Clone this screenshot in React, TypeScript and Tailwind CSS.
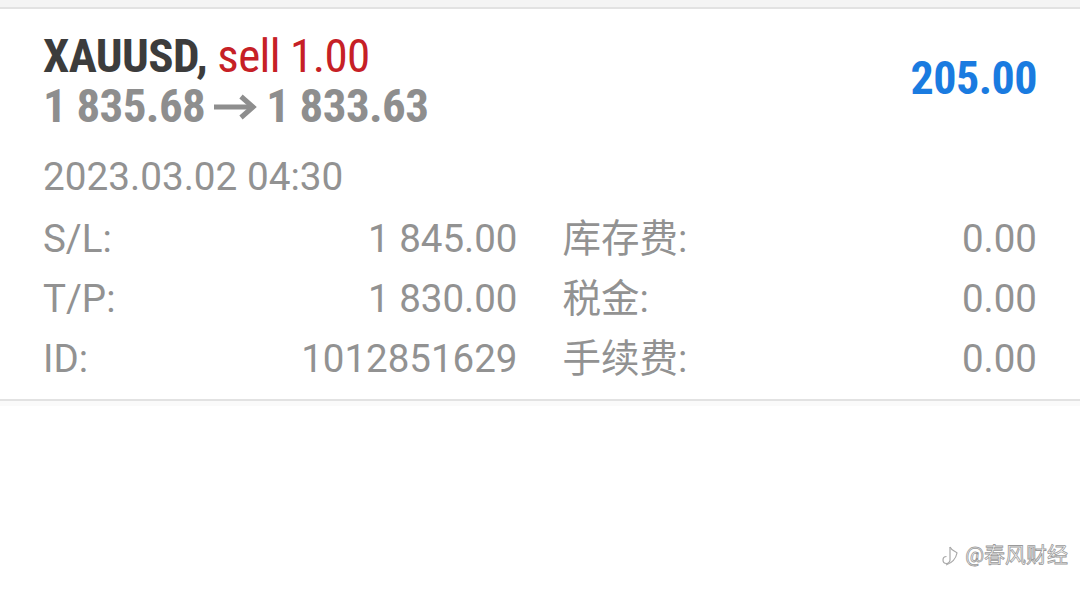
import React from "react";

const rows = [
  ["S/L:", "1 845.00", "库存费:", "0.00"],
  ["T/P:", "1 830.00", "税金:", "0.00"],
  ["ID:", "1012851629", "手续费:", "0.00"],
];

export default function App() {
  const cond = { fontFamily: '"Liberation Sans Narrow", "Roboto Condensed", Roboto, sans-serif' };
  return (
    <div className="w-[1080px] h-[596px] bg-white overflow-hidden relative" style={{ fontFamily: 'Roboto, "Noto Sans CJK SC", sans-serif' }}>
      <div className="h-[7px] bg-[#f4f4f4]" />
      <div className="h-[2px] bg-[#e2e2e2]" />
      <div className="px-[43px] pt-[22px] pb-[10px]">
        <div className="flex items-center justify-between">
          <div className="flex flex-col" style={cond}>
            <div className="text-[47px] leading-[50px] font-bold text-[#3c3c3c] tracking-[-0.6px]">
              XAUUSD, <span className="font-normal text-[#c62026]">sell 1.00</span>
            </div>
            <div className="flex items-center text-[47px] leading-[50px] font-bold text-[#8e8e8e] tracking-[-0.6px]">
              <span>1 835.68</span>
              <svg className="mx-[9px] mt-[2px]" width="43" height="26" viewBox="0 0 43 26" fill="none" stroke="#8e8e8e" strokeWidth="5">
                <path d="M0 13 H39" />
                <path d="M27 2.5 L39 13 L27 23.5" />
              </svg>
              <span>1 833.63</span>
            </div>
          </div>
          <div className="text-[46px] font-bold text-[#1a7be0] tracking-[-0.5px] mb-[6px]" style={cond}>205.00</div>
        </div>
        <div className="mt-[22px] text-[38.7px] leading-[48px] text-[#929292]">2023.03.02 04:30</div>
        <div className="mt-[8px] flex flex-col">
          {rows.map((r) => (
            <div key={r[0]} className="grid grid-cols-2 gap-x-[45px] h-[60px] items-center text-[38.5px] text-[#929292]">
              <div className="flex justify-between">
                <span>{r[0]}</span>
                <span>{r[1]}</span>
              </div>
              <div className="flex justify-between">
                <span>{r[2]}</span>
                <span>{r[3]}</span>
              </div>
            </div>
          ))}
        </div>
      </div>
      <div className="h-[2px] bg-[#e2e2e2]" />
      <div className="h-[5px] bg-[#fafafa]" />
      <div className="absolute right-[12px] top-[540px] flex items-center gap-[6px] text-white text-[21px] [-webkit-text-stroke:0.8px_#9a9a9a]">
        <svg width="18" height="26" viewBox="0 0 18 26" fill="none" stroke="#a8a8a8" strokeWidth="1.2">
          <path d="M9 4 v13 a3.5 3.5 0 1 1 -3.5 -3.5" />
          <path d="M9 4 c2 4 5 4 7 6 c-1 5 -5 10 -11 12" />
        </svg>
        <span>@春风财经</span>
      </div>
    </div>
  );
}
